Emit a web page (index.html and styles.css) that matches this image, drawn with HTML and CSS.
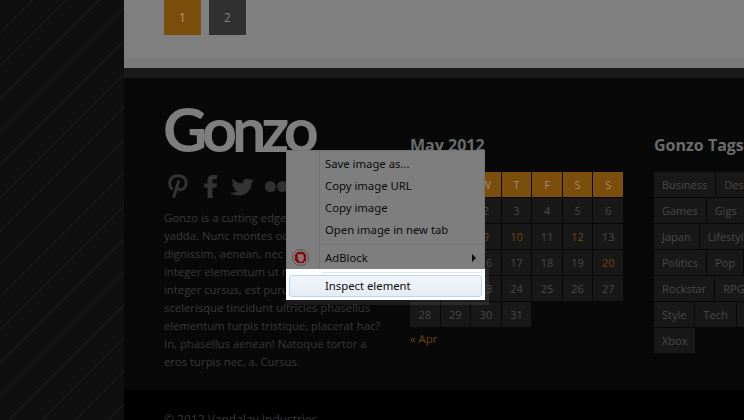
FILE: index.html
```html
<!DOCTYPE html>
<html lang="en">
<head>
<meta charset="utf-8">
<title>Gonzo</title>
<link rel="stylesheet" href="styles.css">
</head>
<body>
<div class="page">
  <aside class="stripes">
    <svg class="stripe-svg" width="124" height="420" xmlns="http://www.w3.org/2000/svg">
      <defs>
        <pattern id="st" width="33" height="33" patternUnits="userSpaceOnUse">
          <path d="M-2 35L35 -2M-19 19L19 -19M14 52L52 14" stroke="#191919" stroke-width="1.300" fill="none"/>
        </pattern>
      </defs>
      <rect width="124" height="420" fill="url(#st)"/>
    </svg>
  </aside>
  <main class="main">
    <section class="content">
      <nav class="pager">
        <span class="pg pg-on">1</span>
        <span class="pg pg-off">2</span>
      </nav>
    </section>
    <div class="band"></div>
    <div class="bar"></div>
    <footer class="footer">
      <div class="col col-about">
        <div class="logo">Gonzo</div>
        <div class="social">
          <svg class="ic ic-p" width="21" height="24" viewBox="0 0 21 24"><path fill="none" stroke="#333" stroke-width="3" stroke-linecap="round" d="M4.500 14.500C1 10 2.500 2 10.500 1.700 18 1.500 20.500 7 18.500 12 16.500 16.500 11.500 16.500 10.500 14M11.500 7.500L7 22.500"/></svg>
          <svg class="ic ic-f" width="13" height="23" viewBox="0 0 13 23"><path fill="#333" d="M3.500 23V12.500H0V8.500h3.500V5.500C3.500 2 5.500 0 9 0h4v4h-2.500C9 4 8.500 4.700 8.500 6v2.500H13l-.6 4H8.500V23z"/></svg>
          <svg class="ic ic-t" width="24" height="18" viewBox="0 0 24 18"><path fill="#333" d="M24 2.500l-2.700.8L23.500.8l-2.900 1.300C18.500 0 15 .3 13.500 2.500c-.6 1-.7 2-.5 3C8.500 5.500 5 3.500 2.500.5c-.5 2 0 4 1.500 5.500L2 5.500c.3 2 1.500 3.500 3.500 4.500L3.500 10c.7 1.700 2 2.700 4 3-1.800 1.300-4.500 2-7.500 1.700C5.500 19 15 18.500 19.500 12c1.500-2.200 2-4.500 2-6.800z"/></svg>
          <span class="dots"><i></i><i></i></span>
        </div>
        <p class="about">Gonzo is a cutting edge theme blah<br>yadda. Nunc montes odio rhoncus<br>dignissim, aenean, nec a sociis<br>integer elementum ut magna et<br>integer cursus, est purus tortor<br>scelerisque tincidunt ultricies phasellus<br>elementum turpis tristique, placerat hac?<br>In, phasellus aenean! Natoque tortor a<br>eros turpis nec, a. Cursus.</p>
      </div>
      <div class="col col-cal">
        <h3 class="heading">May 2012</h3>
        <div class="cal">
          <span class="h">M</span><span class="h">T</span><span class="h">W</span><span class="h">T</span><span class="h">F</span><span class="h">S</span><span class="h">S</span>
          <span class="d">&nbsp;</span><span class="d">1</span><span class="d">2</span><span class="d">3</span><span class="d">4</span><span class="d">5</span><span class="d">6</span>
          <span class="d">7</span><span class="d">8</span><span class="d link">9</span><span class="d link">10</span><span class="d">11</span><span class="d link">12</span><span class="d">13</span>
          <span class="d">14</span><span class="d">15</span><span class="d">16</span><span class="d">17</span><span class="d">18</span><span class="d">19</span><span class="d link">20</span>
          <span class="d">21</span><span class="d">22</span><span class="d">23</span><span class="d">24</span><span class="d">25</span><span class="d">26</span><span class="d">27</span>
          <span class="d">28</span><span class="d">29</span><span class="d">30</span><span class="d">31</span>
        </div>
        <div class="prev">« Apr</div>
      </div>
      <div class="col col-tags">
        <h3 class="heading">Gonzo Tags</h3>
        <div class="tags">
          <div class="tagrow"><span class="tag">Business</span><span class="tag">Design</span></div>
          <div class="tagrow"><span class="tag">Games</span><span class="tag">Gigs</span><span class="tag">Indie</span></div>
          <div class="tagrow"><span class="tag">Japan</span><span class="tag">Lifestyle</span></div>
          <div class="tagrow"><span class="tag">Politics</span><span class="tag">Pop</span><span class="tag">Press</span></div>
          <div class="tagrow"><span class="tag">Rockstar</span><span class="tag">RPG</span></div>
          <div class="tagrow"><span class="tag">Style</span><span class="tag">Tech</span><span class="tag">Web</span></div>
          <div class="tagrow"><span class="tag">Xbox</span></div>
        </div>
      </div>
    </footer>
    <div class="copy">© 2012 Vandalay Industries</div>
  </main>
  <div class="glow"></div>
  <div class="menu">
    <div class="menu-rail"></div>
    <div class="mi">Save image as...</div>
    <div class="mi">Copy image URL</div>
    <div class="mi">Copy image</div>
    <div class="mi">Open image in new tab</div>
    <div class="msep"></div>
    <div class="mi adblock">
      <svg class="ab" width="17" height="17" viewBox="0 0 18 18"><path d="M5.500 1h7L17 5.500v7L12.500 17h-7L1 12.500v-7z" fill="#8c8c8c" stroke="#4a4a4a" stroke-width="1"/><path d="M6 3h6l3 3v6l-3 3H6l-3-3V6z" fill="#7c0c0c"/><path d="M6 7.500V5.500h5.500V7l1-.3v3.800L11 13.500H8L6 10.500z" fill="#937070"/></svg>
      AdBlock<span class="arrow"></span>
    </div>
    <div class="mlit">
      <div class="msep2"></div>
      <div class="mi inspect">Inspect element</div>
    </div>
  </div>
</div>
</body>
</html>
```
FILE: styles.css
```css
* { box-sizing: border-box; }
html, body { margin: 0; padding: 0; height: 100%; }
body { background: #0f0f0f; overflow: hidden; font-family: "Open Sans", sans-serif; }
.page { display: flex; width: 744px; height: 420px; overflow: hidden; position: relative; }
.stripes { flex: 0 0 124px; height: 420px; background: #0f0f0f; }
.stripe-svg { display: block; }
.main { flex: 0 0 620px; display: flex; flex-direction: column; width: 620px; overflow: hidden; background: #080808; }
.content { height: 58px; background: #808080; padding-left: 40px; flex: none; }
.pager { display: flex; gap: 8px; }
.pg { width: 37px; height: 35px; display: flex; align-items: center; justify-content: center; font-size: 12px; }
.pg-on { background: #7c4e0c; color: #a89878; }
.pg-off { background: #303030; color: #808080; }
.band { height: 10px; background: #7a7a7a; flex: none; }
.bar { height: 10px; background: #1a1a1a; flex: none; }
.footer { height: 312px; flex: none; background: #080808; display: flex; padding-left: 40px; }
.col { flex: none; }
.col-about { width: 246px; padding-top: 21px; }
.logo { font-family: Lato, sans-serif; font-weight: 700; font-size: 61px; line-height: 60px; letter-spacing: -5px; color: #7e7e7e; height: 60px; margin-left: -1px; }
.social { display: flex; align-items: center; height: 26px; margin-top: 14px; padding-left: 3px; }
.ic { flex: none; display: block; }
.ic-f { margin-left: 16px; }
.ic-t { margin-left: 13px; margin-top: 2px; }
.dots { display: flex; gap: 1px; margin-left: 11px; }
.dots i { width: 11px; height: 11px; border-radius: 50%; background: #303030; display: block; }
.about { margin: 0; padding-top: 10px; font-size: 11.300px; line-height: 18px; color: #383838; white-space: nowrap; }
.col-cal { width: 244px; padding-top: 55px; }
.heading { margin: 0 0 15px; font-size: 16px; line-height: 24px; font-weight: 700; color: #6a6c6c; white-space: nowrap; }
.cal { display: grid; grid-template-columns: repeat(7, 1fr); gap: 1px; width: 213px; }
.cal span { height: 25px; display: flex; align-items: center; justify-content: center; font-size: 11px; }
.h { background: #7c4e0c; color: #a08c70; }
.d { background: #181818; color: #484848; }
.d.link { color: #6a4610; }
.prev { margin-top: 2px; font-size: 11.300px; color: #6a4610; line-height: 20px; }
.col-tags { width: 200px; padding-top: 55px; }
.tags { display: flex; flex-direction: column; gap: 1px; }
.tagrow { display: flex; gap: 1px; white-space: nowrap; }
.tag { height: 25px; padding: 0 8px; background: #181818; color: #484848; font-size: 11px; line-height: 25px; }
.copy { background: #000; padding: 21px 40px 0; font-size: 12px; line-height: 18px; color: #383838; height: 30px; flex: none; }
.glow { position: absolute; left: 286px; top: 268px; width: 203px; height: 37px; background: rgba(255,255,255,.08); }
.menu { position: absolute; left: 286px; top: 150px; width: 199px; height: 150px; background: #7e7e7e; border: 1px solid #747474; padding-top: 2px; font-family: "Noto Sans", sans-serif; color: #0c0c0c; font-size: 11.300px; }
.menu-rail { position: absolute; left: 32px; top: 0; bottom: 0; width: 1px; background: #747474; }
.mi { height: 22px; line-height: 22px; padding-left: 38px; position: relative; white-space: nowrap; }
.msep { height: 1px; background: #747474; margin: 3px 3px 2px 33px; }
.ab { position: absolute; left: 5px; top: 2px; }
.arrow { position: absolute; right: 8px; top: 7px; border-left: 4px solid #0c0c0c; border-top: 4px solid transparent; border-bottom: 4px solid transparent; }
.mlit { position: absolute; left: -1px; right: -1px; bottom: -1px; height: 31px; background: #fff; padding: 3px 3px 3px; }
.msep2 { height: 1px; background: #e2e3e3; margin: 0 0 2px 33px; }
.inspect { height: 22px; line-height: 20px; padding-left: 35px; border: 1px solid #b8d6fb; border-radius: 3px; background: linear-gradient(#f1f4fa, #e6ecf6); }
```
